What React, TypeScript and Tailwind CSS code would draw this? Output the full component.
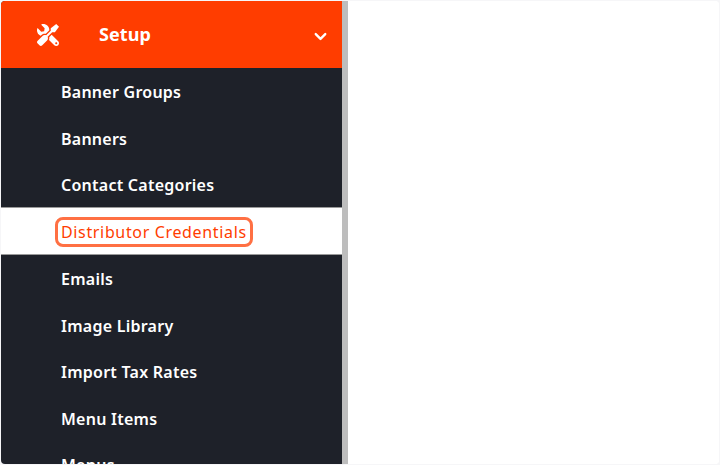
import { FaTools } from "react-icons/fa";
import { LuChevronDown } from "react-icons/lu";

const before = ["Banner Groups", "Banners", "Contact Categories"];
const after = ["Emails", "Image Library", "Import Tax Rates", "Menu Items", "Menus"];

function Row({ label }: { label: string }) {
  return (
    <div className="h-[46.4px] shrink-0 flex items-center pt-[2px] pl-[60px] text-[16px] font-semibold tracking-[0.25px] text-white">
      {label}
    </div>
  );
}

export default function App() {
  return (
    <div className="h-[465px] w-[720px] overflow-hidden bg-[#f6f6f8] p-px font-['Noto_Sans',sans-serif]">
      <div className="flex h-full rounded-[4px] overflow-hidden bg-white">
        <div className="w-[341px] h-full overflow-hidden bg-[#1e2129] flex flex-col">
          <div className="h-[67px] shrink-0 bg-[#ff3d00] flex items-center text-white">
            <div className="w-[98px] pl-[36px] shrink-0 flex items-center">
              <FaTools className="w-[22px] h-[22px] -scale-x-100" />
            </div>
            <span className="text-[18px] font-bold flex-1 tracking-[0.1px]">Setup</span>
            <LuChevronDown className="w-[19px] h-[19px] mr-[12px] mt-[4px]" strokeWidth={3} />
          </div>
          <div className="flex flex-col">
            {before.map((l) => (
              <Row key={l} label={l} />
            ))}
            <div className="h-[48px] shrink-0 bg-white border-y border-[#9a9a9a] flex items-center pt-[2px] pl-[54px]">
              <span className="border-[3px] border-[#ff7043] rounded-[8px] pl-[3px] pr-[3px] h-[30px] flex items-center text-[16px] tracking-[0.65px] text-[#ff3d00]">
                Distributor Credentials
              </span>
            </div>
            {after.map((l) => (
              <Row key={l} label={l} />
            ))}
          </div>
        </div>
        <div className="w-[6px] h-full bg-[#bdbdbd] shrink-0" />
        <div className="flex-1 bg-white" />
      </div>
    </div>
  );
}
